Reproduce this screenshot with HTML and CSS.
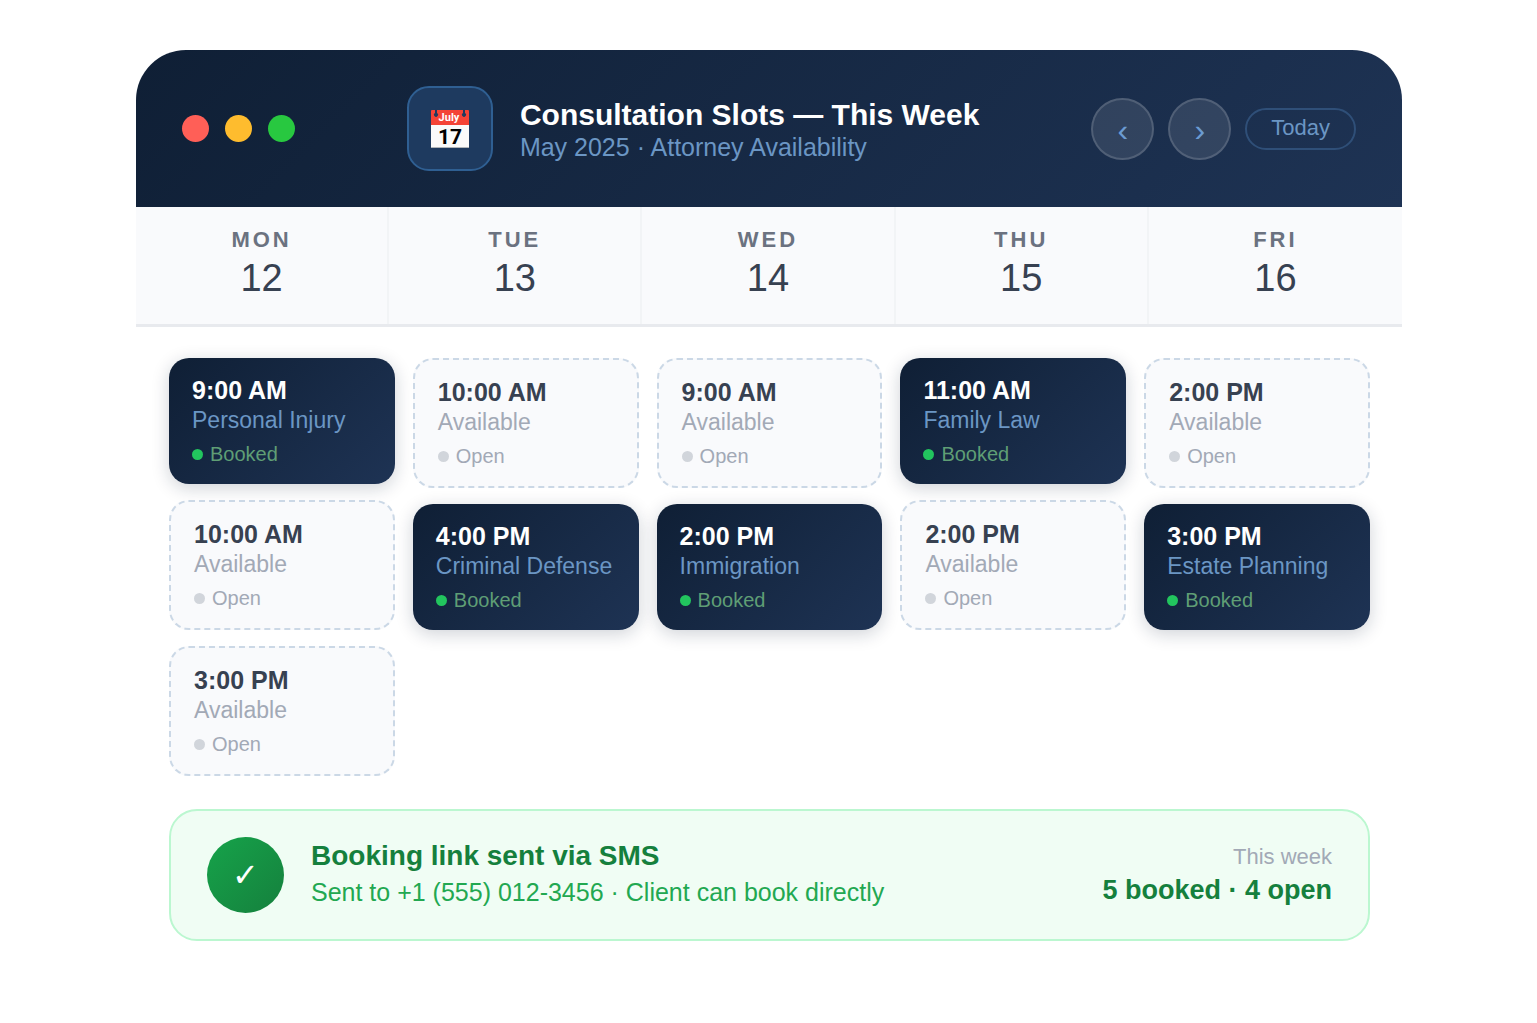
FILE: index.html
```html
<!DOCTYPE html>
<html lang="en">
<head>
    <meta charset="UTF-8">
    <meta name="viewport" content="width=device-width, initial-scale=1.0">
    <title>Consultation Slots</title>
    <link rel="stylesheet" href="styles.css">
</head>
<body>
    <main class="calendar">
        <header class="header">
            <div class="window-dots">
                <span class="dot red"></span>
                <span class="dot yellow"></span>
                <span class="dot green"></span>
            </div>
            <div class="heading">
                <div class="heading-icon">
                    <svg width="40" height="40" viewBox="0 0 40 40" aria-hidden="true">
                        <path d="M2 1h36a1 1 0 0 1 1 1v14H1V2a1 1 0 0 1 1-1z" fill="#f44336"/>
                        <path d="M1 16h38v22a1 1 0 0 1-1 1H2a1 1 0 0 1-1-1z" fill="#fafafa"/>
                        <path d="M1 38h38a1 1 0 0 1-1 1H2a1 1 0 0 1-1-1z" fill="#b0b4b8"/>
                        <path d="M5 1h2v3a2 2 0 1 1-2 0zM33 1h2v3a2 2 0 1 1-2 0z" fill="#1e3a5f"/>
                        <text class="icon-month" x="19" y="12">July</text>
                        <text class="icon-day" x="20" y="35">17</text>
                    </svg>
                </div>
                <div>
                    <h1 class="title">Consultation Slots — This Week</h1>
                    <p class="subtitle">May 2025 · Attorney Availability</p>
                </div>
            </div>
            <div class="controls">
                <button class="nav-btn" type="button" aria-label="Previous week">‹</button>
                <button class="nav-btn" type="button" aria-label="Next week">›</button>
                <button class="today-btn" type="button">Today</button>
            </div>
        </header>

        <div class="days">
            <div class="day"><div class="day-name">MON</div><div class="day-number">12</div></div>
            <div class="day"><div class="day-name">TUE</div><div class="day-number">13</div></div>
            <div class="day"><div class="day-name">WED</div><div class="day-number">14</div></div>
            <div class="day"><div class="day-name">THU</div><div class="day-number">15</div></div>
            <div class="day"><div class="day-name">FRI</div><div class="day-number">16</div></div>
        </div>

        <div class="slots">
            <div class="column">
                <div class="slot booked">
                    <div class="time">9:00 AM</div>
                    <div class="type">Personal Injury</div>
                    <div class="status">Booked</div>
                </div>
                <div class="slot open">
                    <div class="time">10:00 AM</div>
                    <div class="type">Available</div>
                    <div class="status">Open</div>
                </div>
                <div class="slot open">
                    <div class="time">3:00 PM</div>
                    <div class="type">Available</div>
                    <div class="status">Open</div>
                </div>
            </div>
            <div class="column">
                <div class="slot open">
                    <div class="time">10:00 AM</div>
                    <div class="type">Available</div>
                    <div class="status">Open</div>
                </div>
                <div class="slot booked">
                    <div class="time">4:00 PM</div>
                    <div class="type">Criminal Defense</div>
                    <div class="status">Booked</div>
                </div>
            </div>
            <div class="column">
                <div class="slot open">
                    <div class="time">9:00 AM</div>
                    <div class="type">Available</div>
                    <div class="status">Open</div>
                </div>
                <div class="slot booked">
                    <div class="time">2:00 PM</div>
                    <div class="type">Immigration</div>
                    <div class="status">Booked</div>
                </div>
            </div>
            <div class="column">
                <div class="slot booked">
                    <div class="time">11:00 AM</div>
                    <div class="type">Family Law</div>
                    <div class="status">Booked</div>
                </div>
                <div class="slot open">
                    <div class="time">2:00 PM</div>
                    <div class="type">Available</div>
                    <div class="status">Open</div>
                </div>
            </div>
            <div class="column">
                <div class="slot open">
                    <div class="time">2:00 PM</div>
                    <div class="type">Available</div>
                    <div class="status">Open</div>
                </div>
                <div class="slot booked">
                    <div class="time">3:00 PM</div>
                    <div class="type">Estate Planning</div>
                    <div class="status">Booked</div>
                </div>
            </div>
        </div>

        <footer class="notice">
            <div class="notice-icon">✓</div>
            <div class="notice-text">
                <h2 class="notice-title">Booking link sent via SMS</h2>
                <p class="notice-sub">Sent to +1 (555) 012-3456 · Client can book directly</p>
            </div>
            <div class="summary">
                <p class="summary-label">This week</p>
                <p class="summary-value">5 booked · 4 open</p>
            </div>
        </footer>
    </main>
</body>
</html>
```
FILE: styles.css
```css
* {
    margin: 0;
    padding: 0;
    box-sizing: border-box;
}

body {
    font-family: "Liberation Sans", Arial, sans-serif;
    background: #ffffff;
    padding: 50px 135px 50px 136px;
}

.calendar {
    background: #ffffff;
    border-radius: 50px;
    overflow: hidden;
}

/* Header */
.header {
    display: flex;
    align-items: center;
    justify-content: space-between;
    padding: 36px 46px;
    background: linear-gradient(135deg, #0f1f35, #1e3354);
}

.window-dots {
    display: flex;
    gap: 16px;
}

.dot {
    width: 27px;
    height: 27px;
    border-radius: 50%;
}

.red {
    background: #ff5f57;
}

.yellow {
    background: #febc2e;
}

.green {
    background: #28c840;
}

.heading {
    display: flex;
    align-items: center;
    gap: 27px;
}

.heading-icon {
    display: flex;
    align-items: center;
    justify-content: center;
    width: 86px;
    height: 85px;
    background: #1e3a5f;
    border: 2px solid #2f5f92;
    border-radius: 22px;
}

.icon-month {
    font: bold 11px Roboto, sans-serif;
    fill: #ffffff;
    text-anchor: middle;
}

.icon-day {
    font: bold 21px Roboto, sans-serif;
    fill: #000000;
    text-anchor: middle;
}

.title {
    font-size: 30px;
    line-height: 36px;
    color: #ffffff;
}

.subtitle {
    font-size: 25px;
    line-height: 28px;
    color: #6b96c4;
}

.controls {
    display: flex;
    align-items: center;
    gap: 14px;
}

.nav-btn,
.today-btn {
    font-family: inherit;
    color: #6b9bd2;
    cursor: pointer;
}

.nav-btn {
    width: 63px;
    height: 62px;
    padding-top: 4px;
    font-size: 32px;
    background: rgba(255, 255, 255, 0.1);
    border: 2px solid rgba(255, 255, 255, 0.15);
    border-radius: 50%;
}

.today-btn {
    height: 42px;
    padding: 0 24px 2px;
    font-size: 22px;
    color: #6b96c4;
    background: none;
    border: 2px solid #2f4f78;
    border-radius: 21px;
}

/* Day names */
.days {
    display: grid;
    grid-template-columns: repeat(5, 1fr);
    background: #f9fafc;
    border-bottom: 3px solid #e8eaee;
}

.day {
    padding: 20px 0 24px;
    text-align: center;
    border-right: 2px solid #f2f4f6;
}

.day:last-child {
    border-right: none;
}

.day-name {
    font-size: 22px;
    font-weight: bold;
    line-height: 26px;
    letter-spacing: 3px;
    color: #6b7280;
    margin-bottom: 3px;
}

.day-number {
    font-size: 38px;
    line-height: 44px;
    color: #374151;
}

/* Slots */
.slots {
    display: grid;
    grid-template-columns: repeat(5, 1fr);
    gap: 18px;
    padding: 31px 32px 33px 33px;
}

.column {
    display: flex;
    flex-direction: column;
    gap: 16px;
}

.slot {
    padding: 18px 23px;
    border-radius: 20px;
}

.time {
    font-size: 25px;
    font-weight: bold;
    line-height: 28px;
    margin-bottom: 3px;
}

.type {
    font-size: 23px;
    line-height: 26px;
    margin-bottom: 9px;
}

.status {
    display: flex;
    align-items: center;
    gap: 7px;
    font-size: 20px;
    line-height: 24px;
}

.status::before {
    content: "";
    width: 11px;
    height: 11px;
    border-radius: 50%;
}

.booked {
    background: linear-gradient(135deg, #0f1f35, #1e3354);
    box-shadow: 0 4px 18px rgba(15, 31, 53, 0.2);
}

.booked .time {
    color: #ffffff;
}

.booked .type {
    color: #6b96c4;
}

.booked .status {
    color: #5f9e75;
}

.booked .status::before {
    background: #22c55e;
}

.open {
    background: #f9fafc;
    border: 2px dashed #cbd8e6;
}

.open .time {
    color: #374151;
}

.open .type,
.open .status {
    color: #a2a9b6;
}

.open .status::before {
    background: #d1d5db;
}

/* SMS notice */
.notice {
    display: flex;
    align-items: center;
    gap: 27px;
    margin: 0 32px 32px 33px;
    padding: 26px 36px;
    background: #f0fdf4;
    border: 2px solid #bbf7d0;
    border-radius: 28px;
}

.notice-icon {
    display: flex;
    align-items: center;
    justify-content: center;
    width: 77px;
    height: 76px;
    font: 32px "DejaVu Sans", sans-serif;
    color: #ffffff;
    background: linear-gradient(135deg, #16a34a, #15803d);
    border-radius: 50%;
}

.notice-text {
    flex: 1;
}

.notice-title {
    font-size: 28px;
    line-height: 30px;
    color: #15803d;
    margin-bottom: 4px;
}

.notice-sub {
    font-size: 25px;
    line-height: 34px;
    color: #22a851;
}

.summary {
    text-align: right;
}

.summary-label {
    font-size: 22px;
    line-height: 28px;
    color: #a2a9b6;
    margin-bottom: 2px;
}

.summary-value {
    font-size: 27px;
    font-weight: bold;
    line-height: 34px;
    color: #15803d;
}
```
